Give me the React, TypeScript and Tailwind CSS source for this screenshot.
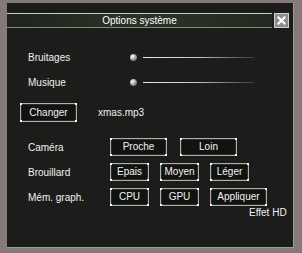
import React from "react";

const font = { fontFamily: '"Liberation Sans", Arial, sans-serif' };

function Btn({ label, w }: { label: string; w: string }) {
  return (
    <button
      className={`relative ${w} h-[18px] rounded-[2px] border border-[#aeaeaa] bg-[#111311] text-[10px] leading-none text-[#f2f2f2] shadow-[inset_0_0_0_1px_#2a2c28]`}
    >
      <span className="absolute left-[-1px] top-[-1px] h-[2px] w-[2px] bg-white" />
      <span className="absolute right-[-1px] top-[-1px] h-[2px] w-[2px] bg-white" />
      <span className="absolute left-[-1px] bottom-[-1px] h-[2px] w-[2px] bg-white" />
      <span className="absolute right-[-1px] bottom-[-1px] h-[2px] w-[2px] bg-white" />
      {label}
    </button>
  );
}

function Slider({ label }: { label: string }) {
  return (
    <div className="flex h-[20px] items-center">
      <span className="w-[123px] pl-[21px]">{label}</span>
      <span className="h-[7px] w-[7px] rounded-full bg-[radial-gradient(circle_at_35%_35%,#ffffff,#a8a8a8_45%,#3a3a3a)]" />
      <span className="ml-[6px] h-[1px] w-[111px] bg-gradient-to-r from-[#e8e8e8] via-[#c8c8c8] to-[#3a3a38]" />
    </div>
  );
}

export default function App() {
  return (
    <div
      className="h-[253px] w-[302px] bg-[#85797a] pb-[5px] pl-[7px] pr-[8px] pt-[3px] text-[10px] text-[#f0f0f0]"
      style={font}
    >
      <div className="flex h-full flex-col border-b border-r border-[#98a08e] bg-[#1c1d1b]">
        {/* title bar */}
        <div className="mt-[10px] flex h-[15px] items-stretch">
          <div className="flex flex-1 items-center justify-center border-b border-t border-b-[#7e8e6c] border-t-[#c9d0bc] bg-gradient-to-r from-[#1e231c] via-[#2b3327] to-[#232920] text-[#ffffff]">
            Options système
          </div>
          <div className="ml-[2px] mr-[4px] flex w-[15px] items-center justify-center border border-[#d0d0d0] bg-[#8c8c8c]">
            <svg width="9" height="9" viewBox="0 0 9 9">
              <path d="M1.5 1.5 L7.5 7.5 M7.5 1.5 L1.5 7.5" stroke="#ffffff" strokeWidth="2.2" strokeLinecap="square" />
            </svg>
          </div>
        </div>

        <div className="mt-[19px]">
          <Slider label="Bruitages" />
        </div>
        <div className="mt-[5px]">
          <Slider label="Musique" />
        </div>

        <div className="mt-[11px] flex h-[19px] items-center pl-[13px]">
          <Btn label="Changer" w="w-[57px] h-[19px]" />
          <span className="ml-[21px]">xmas.mp3</span>
        </div>

        <div className="mt-[16px] flex items-center">
          <span className="w-[103px] pl-[21px]">Caméra</span>
          <div className="flex gap-[13px]">
            <Btn label="Proche" w="w-[57px]" />
            <Btn label="Loin" w="w-[57px]" />
          </div>
        </div>

        <div className="mt-[7px] flex items-center">
          <span className="w-[103px] pl-[21px]">Brouillard</span>
          <div className="flex gap-[11px]">
            <Btn label="Epais" w="w-[39px]" />
            <Btn label="Moyen" w="w-[39px]" />
            <Btn label="Léger" w="w-[39px]" />
          </div>
        </div>

        <div className="mt-[7px] flex items-center">
          <span className="w-[103px] pl-[21px]">Mém. graph.</span>
          <div className="flex gap-[11px]">
            <Btn label="CPU" w="w-[39px]" />
            <Btn label="GPU" w="w-[39px]" />
            <Btn label="Appliquer" w="w-[57px]" />
          </div>
        </div>

        <div className="mt-[1px] pl-[242px] leading-[12px]">Effet HD</div>
      </div>
    </div>
  );
}
